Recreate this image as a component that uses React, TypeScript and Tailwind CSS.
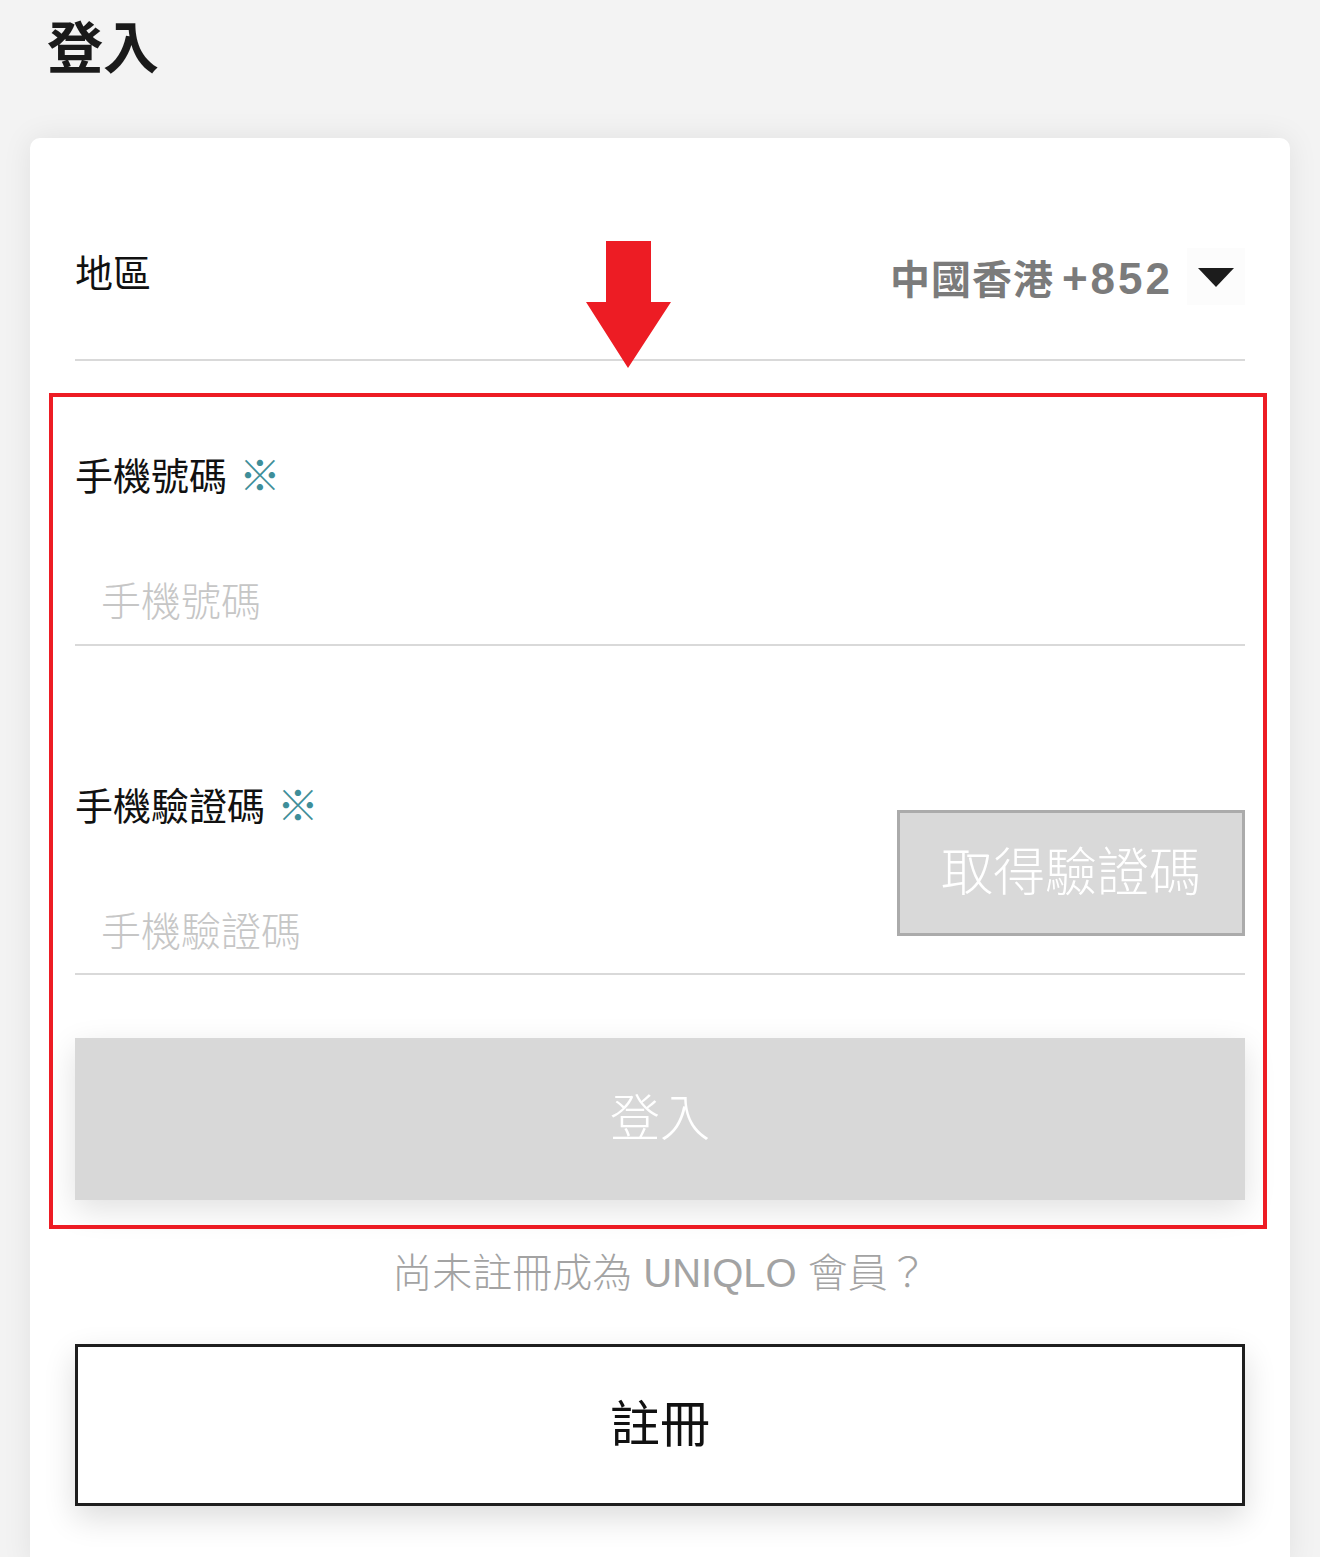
import React from "react";

const font = { fontFamily: '"Liberation Sans", "Noto Sans CJK TC", sans-serif' };

function Required() {
  return <span className="inline-block ml-[3px] scale-110 text-[#3e8e99]">※</span>;
}

export default function App() {
  return (
    <div className="min-h-[1557px] bg-[#f3f3f3] px-[30px]" style={font}>
      <div className="h-[138px] pt-[21px] pl-[17px]">
        <h1 className="text-[56px] leading-none font-bold text-[#1a1a1a]">登入</h1>
      </div>

      <div className="relative bg-white rounded-t-[10px] shadow-[0_0_30px_rgba(0,0,0,0.08)] px-[45px] pb-[60px]">
        {/* region */}
        <div className="h-[223px] pt-[117px] border-b-2 border-[#d9d9d9] flex justify-between items-start">
          <span className="text-[38px] leading-none text-[#111]">地區</span>
          <div className="flex items-start -mt-[7px]">
            <div className="flex items-baseline mt-[9px] font-bold text-[#7b7b7b]">
              <span className="text-[40px] leading-none tracking-[1px]">中國香港</span>
              <span className="ml-[8px] text-[44px] leading-none tracking-[3px]">+852</span>
            </div>
            <div className="ml-[14px] w-[58px] h-[57px] bg-[#fcfcfc] flex items-center justify-center">
              <svg width="36" height="19" viewBox="0 0 36 19" className="mt-[2px]">
                <path d="M0 0 H36 L18 19 Z" fill="#1c1c1c" />
              </svg>
            </div>
          </div>
        </div>

        {/* phone number */}
        <div className="pt-[97px] pb-[22px] border-b-2 border-[#d9d9d9]">
          <label className="block text-[38px] leading-none text-[#111]">
            手機號碼 <Required />
          </label>
          <input
            className="block w-full mt-[86px] pl-[26px] h-[40px] text-[40px] leading-none font-light outline-none placeholder:text-[#c6c6c6]"
            placeholder="手機號碼"
          />
        </div>

        {/* verification code */}
        <div className="pt-[142px] border-b-2 border-[#d9d9d9] flex items-start">
          <div className="flex-1 pb-[21px]">
            <label className="block text-[38px] leading-none text-[#111]">
              手機驗證碼 <Required />
            </label>
            <input
              className="block w-full mt-[86px] pl-[26px] h-[40px] text-[40px] leading-none font-light outline-none placeholder:text-[#c6c6c6]"
              placeholder="手機驗證碼"
            />
          </div>
          <button className="mt-[22px] w-[348px] h-[126px] bg-[#d9d9d9] border-[3px] border-[#ababab] text-white text-[52px] leading-none font-light">
            取得驗證碼
          </button>
        </div>

        <button className="mt-[63px] w-full h-[162px] bg-[#d8d8d8] text-white text-[50px] leading-none font-light shadow-[0_10px_30px_rgba(0,0,0,0.12)]">
          登入
        </button>

        <p className="mt-[53px] text-center text-[40px] leading-none font-light text-[#a3a3a3]">
          尚未註冊成為 UNIQLO 會員？
        </p>

        <button className="mt-[51px] w-full h-[162px] bg-white border-[3px] border-[#1e1e1e] text-[#111] text-[50px] leading-none shadow-[0_12px_30px_rgba(0,0,0,0.14)]">
          註冊
        </button>

        {/* annotation overlay */}
        <div className="absolute left-[19px] top-[255px] w-[1218px] h-[836px] border-4 border-[#ed1c24] pointer-events-none" />
        <svg className="absolute left-[556px] top-[103px]" width="85" height="128" viewBox="0 0 85 128">
          <path d="M20 0 H65 V61 H85 L42 127 L0 61 H20 Z" fill="#ed1c24" />
        </svg>
      </div>
    </div>
  );
}
